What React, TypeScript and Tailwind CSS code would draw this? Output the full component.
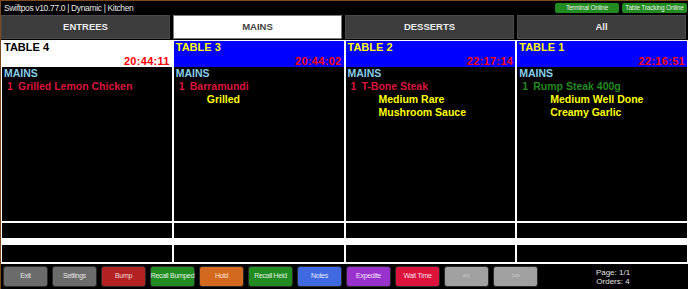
import React from "react";

type Line = { text: string; kind: "item" | "mod"; qty?: string; color?: string };

type Order = {
  table: string;
  time: string;
  active: boolean;
  course: string;
  lines: Line[];
};

const orders: Order[] = [
  {
    table: "TABLE 4",
    time: "20:44:11",
    active: false,
    course: "MAINS",
    lines: [{ qty: "1", text: "Grilled Lemon Chicken", kind: "item", color: "text-[#dc143c]" }],
  },
  {
    table: "TABLE 3",
    time: "20:44:02",
    active: true,
    course: "MAINS",
    lines: [
      { qty: "1", text: "Barramundi", kind: "item", color: "text-[#dc143c]" },
      { text: "Grilled", kind: "mod" },
    ],
  },
  {
    table: "TABLE 2",
    time: "22:17:14",
    active: true,
    course: "MAINS",
    lines: [
      { qty: "1", text: "T-Bone Steak", kind: "item", color: "text-[#dc143c]" },
      { text: "Medium Rare", kind: "mod" },
      { text: "Mushroom Sauce", kind: "mod" },
    ],
  },
  {
    table: "TABLE 1",
    time: "22:16:51",
    active: true,
    course: "MAINS",
    lines: [
      { qty: "1", text: "Rump Steak 400g", kind: "item", color: "text-[#228b22]" },
      { text: "Medium Well Done", kind: "mod" },
      { text: "Creamy Garlic", kind: "mod" },
    ],
  },
];

const tabs = ["ENTREES", "MAINS", "DESSERTS", "All"];

const buttons = [
  { label: "Exit", bg: "bg-[#6b6b6b]", fg: "text-[#e4e4e4]" },
  { label: "Settings", bg: "bg-[#6b6b6b]", fg: "text-[#e4e4e4]" },
  { label: "Bump", bg: "bg-[#b22222]", fg: "text-[#f0d8d8]" },
  { label: "Recall Bumped", bg: "bg-[#228b22]", fg: "text-[#e0f0e0]" },
  { label: "Hold", bg: "bg-[#d2691e]", fg: "text-[#f8e4d4]" },
  { label: "Recall Held", bg: "bg-[#228b22]", fg: "text-[#e0f0e0]" },
  { label: "Notes", bg: "bg-[#4169e1]", fg: "text-[#e4eaff]" },
  { label: "Expedite", bg: "bg-[#9932cc]", fg: "text-[#f0e0f8]" },
  { label: "Wait Time", bg: "bg-[#dc143c]", fg: "text-[#f8dde2]" },
  { label: "<<", bg: "bg-[#a0a0a0]", fg: "text-[#d4d4d4]" },
  { label: ">>", bg: "bg-[#a0a0a0]", fg: "text-[#d4d4d4]" },
];

function OrderColumn({ order }: { order: Order }) {
  return (
    <div className="flex flex-col">
      <div
        className={`h-[26px] flex flex-col justify-between px-[2px] ${
          order.active ? "bg-[#0000ff] text-[#ffff00]" : "bg-white text-black"
        }`}
      >
        <div className="text-[11px] leading-[12px] font-bold">{order.table}</div>
        <div className="text-[11px] leading-[12px] font-bold text-[#ff0000] text-right tracking-[0.3px]">
          {order.time}
        </div>
      </div>
      <div className="h-[154px] bg-black text-[10.5px] leading-[13px] font-bold">
        <div className="pl-[2px] text-[#87ceeb]">{order.course}</div>
        {order.lines.map((l, i) =>
          l.kind === "item" ? (
            <div key={i} className={`flex ${l.color}`}>
              <span className="pl-[5px] w-[16px]">{l.qty}</span>
              <span>{l.text}</span>
            </div>
          ) : (
            <div key={i} className="pl-[33px] text-[#ffff00]">
              {l.text}
            </div>
          )
        )}
      </div>
      <div className="mt-[2px] h-[15px] bg-black" />
      <div className="mt-[7px] h-[17px] bg-black" />
    </div>
  );
}

export default function App() {
  return (
    <div className="w-[688px] h-[289px] bg-black border-t border-l border-[#7b4a1f] flex flex-col overflow-hidden font-['Liberation_Sans',Arial,sans-serif]">
      {/* title bar */}
      <div className="h-[14px] flex items-center justify-between pl-[3px] pr-[1px]">
        <span className="text-[8.5px] text-[#e8e8e8] tracking-[-0.35px]">Swiftpos v10.77.0 | Dynamic | Kitchen</span>
        <div className="flex gap-[3px]">
          <span className="h-[10px] w-[64px] rounded-[2px] bg-[#228b22] text-[6.5px] leading-[10px] text-[#e6f2e6] text-center tracking-[-0.2px] whitespace-nowrap">
            Terminal Online
          </span>
          <span className="h-[10px] w-[65px] rounded-[2px] bg-[#228b22] text-[6.5px] leading-[10px] text-[#e6f2e6] text-center tracking-[-0.2px] whitespace-nowrap">
            Table Tracking Online
          </span>
        </div>
      </div>

      {/* course tabs */}
      <div className="h-[25px] grid grid-cols-4 gap-[3px] pr-[2px] pb-[1px]">
        {tabs.map((t) => (
          <div
            key={t}
            className={`flex items-center justify-center text-[9.5px] font-bold ${
              t === "MAINS"
                ? "bg-white text-[#444] border border-[#7a7a7a]"
                : "bg-[#3c3c3c] text-[#ececec] border border-[#4a4a4a]"
            }`}
          >
            {t}
          </div>
        ))}
      </div>

      {/* orders */}
      <div className="h-[224px] bg-white px-[1px] pt-[1px] grid grid-cols-4 gap-x-[2px]">
        {orders.map((o) => (
          <OrderColumn key={o.table} order={o} />
        ))}
      </div>

      {/* bottom buttons */}
      <div className="flex-1 flex items-center pl-[2px]">
        <div className="flex gap-[4px]">
          {buttons.map((b) => (
            <div
              key={b.label}
              className={`w-[45px] h-[21px] rounded-[3px] border border-[#2a2a2a] flex items-center justify-center whitespace-nowrap text-[7px] tracking-[-0.3px] ${b.bg} ${b.fg}`}
            >
              {b.label}
            </div>
          ))}
        </div>
        <div className="flex-1 flex flex-col items-center text-[8px] leading-[9px] text-[#e4e4e4]">
          <span>Page: 1/1</span>
          <span>Orders: 4</span>
        </div>
      </div>
    </div>
  );
}
